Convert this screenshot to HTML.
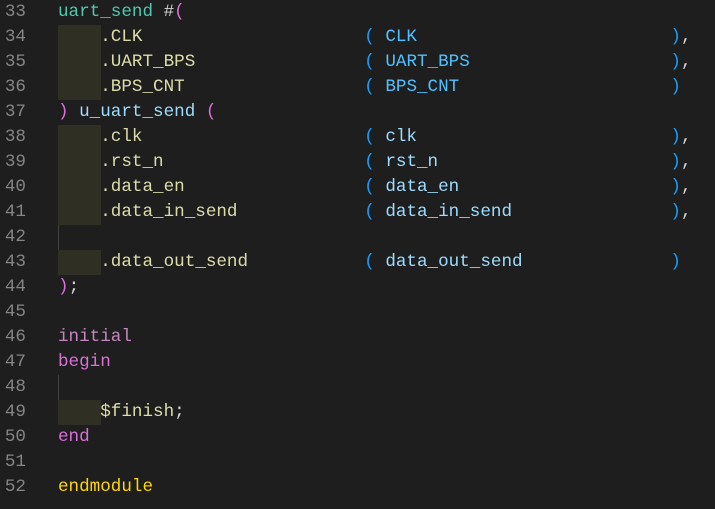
<!DOCTYPE html>
<html><head><meta charset="utf-8"><style>
html,body{margin:0;padding:0;background:#1e1e1e;width:715px;height:509px;overflow:hidden}
.l{position:absolute;left:0;height:25px;line-height:25px;width:715px;font-family:"Liberation Mono",monospace;font-size:17.6px;white-space:pre;color:#d4d4d4}
.n{position:absolute;left:0;width:26px;text-align:right;color:#858585}
.c{position:absolute;left:58px}
.ib{position:absolute;left:58px;width:43px;height:25px;background:#2f2f24}
.g{position:absolute;left:58px;width:1px;height:25px;background:#404040}
.t{color:#4ec9b0}.y{color:#dcdcaa}.b{color:#179fff}.m{color:#da70d6}.k{color:#c586c0}.v{color:#9cdcfe}.u{color:#4fc1ff}.gold{color:#ffd700}
</style></head><body>
<div class="l" style="top:0"><span class="n">33</span><span class="c"><span class="t">uart_send</span> #<span class="m">(</span></span></div>
<div class="l" style="top:25px"><span class="n">34</span><div class="ib"></div><span class="c">    <span class="y">.CLK</span>                     <span class="b">(</span> <span class="u">CLK</span>                        <span class="b">)</span>,</span></div>
<div class="l" style="top:50px"><span class="n">35</span><div class="ib"></div><span class="c">    <span class="y">.UART_BPS</span>                <span class="b">(</span> <span class="u">UART_BPS</span>                   <span class="b">)</span>,</span></div>
<div class="l" style="top:75px"><span class="n">36</span><div class="ib"></div><span class="c">    <span class="y">.BPS_CNT</span>                 <span class="b">(</span> <span class="u">BPS_CNT</span>                    <span class="b">)</span></span></div>
<div class="l" style="top:100px"><span class="n">37</span><span class="c"><span class="m">)</span> <span class="v">u_uart_send</span> <span class="m">(</span></span></div>
<div class="l" style="top:125px"><span class="n">38</span><div class="ib"></div><span class="c">    <span class="y">.clk</span>                     <span class="b">(</span> <span class="v">clk</span>                        <span class="b">)</span>,</span></div>
<div class="l" style="top:150px"><span class="n">39</span><div class="ib"></div><span class="c">    <span class="y">.rst_n</span>                   <span class="b">(</span> <span class="v">rst_n</span>                      <span class="b">)</span>,</span></div>
<div class="l" style="top:175px"><span class="n">40</span><div class="ib"></div><span class="c">    <span class="y">.data_en</span>                 <span class="b">(</span> <span class="v">data_en</span>                    <span class="b">)</span>,</span></div>
<div class="l" style="top:200px"><span class="n">41</span><div class="ib"></div><span class="c">    <span class="y">.data_in_send</span>            <span class="b">(</span> <span class="v">data_in_send</span>               <span class="b">)</span>,</span></div>
<div class="l" style="top:225px"><span class="n">42</span><div class="g"></div></div>
<div class="l" style="top:250px"><span class="n">43</span><div class="ib"></div><span class="c">    <span class="y">.data_out_send</span>           <span class="b">(</span> <span class="v">data_out_send</span>              <span class="b">)</span></span></div>
<div class="l" style="top:275px"><span class="n">44</span><span class="c"><span class="m">)</span>;</span></div>
<div class="l" style="top:300px"><span class="n">45</span></div>
<div class="l" style="top:325px"><span class="n">46</span><span class="c"><span class="k">initial</span></span></div>
<div class="l" style="top:350px"><span class="n">47</span><span class="c"><span class="m">begin</span></span></div>
<div class="l" style="top:375px"><span class="n">48</span><div class="g"></div></div>
<div class="l" style="top:400px"><span class="n">49</span><div class="ib"></div><span class="c">    <span class="y">$finish</span>;</span></div>
<div class="l" style="top:425px"><span class="n">50</span><span class="c"><span class="m">end</span></span></div>
<div class="l" style="top:450px"><span class="n">51</span></div>
<div class="l" style="top:475px"><span class="n">52</span><span class="c"><span class="gold">endmodule</span></span></div>
</body></html>
